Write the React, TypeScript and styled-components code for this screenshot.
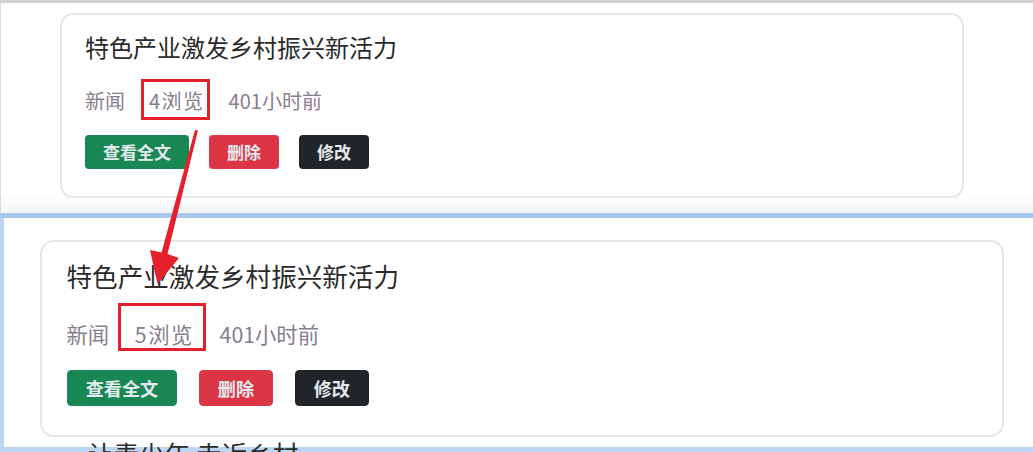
import styled, { createGlobalStyle } from 'styled-components';

// #region StyledComponents

const GlobalStyle = createGlobalStyle`
  html, body {
    margin: 0;
    padding: 0;
    background: #ffffff;
  }
  body {
    width: 1033px;
    height: 452px;
    overflow: hidden;
    font-family: 'Noto Sans CJK SC', 'Noto Sans', sans-serif;
  }
`;

const PageStyled = styled.div`
  position: relative;
  display: flex;
  flex-direction: column;
  width: 1033px;
  height: 452px;
  overflow: hidden;
`;

const TopShotStyled = styled.section`
  box-sizing: border-box;
  height: 213px;
  padding: 10px 0 0 60px;
  border-top: 3px solid #d2d2d2;
  background: linear-gradient(to bottom, #ffffff 0, #ffffff 192px, #f2f4f7 100%);
  box-shadow: inset 1px 0 0 #dcdcdc;
`;

const BottomShotStyled = styled.section`
  box-sizing: border-box;
  height: 239px;
  padding: 27px 0 0 40px;
  overflow: hidden;
  background: #ffffff;
  box-shadow:
    inset 0 5px 0 #a9c6ec,
    inset 4px 0 0 #bcd5f2,
    inset 0 -5px 0 #bdd5f2;
`;

const ZoomStyled = styled.div<{ $scale: number }>`
  zoom: ${(p) => p.$scale};
`;

const CardStyled = styled.article`
  box-sizing: border-box;
  width: 904px;
  height: 185px;
  padding: 14px 23px 0;
  border: 2px solid #e6e6e6;
  border-radius: 13px;
  background: #ffffff;
`;

const TitleStyled = styled.h3`
  margin: 0;
  font-size: 24px;
  line-height: 36px;
  font-weight: 400;
  color: #2a2a2a;
`;

const MetaRowStyled = styled.div`
  display: flex;
  align-items: center;
  gap: 24px;
  margin-top: 21px;
  font-size: 20px;
  line-height: 30px;
  color: #877e8e;
`;

const ViewsStyled = styled.span`
  letter-spacing: 1.5px;
`;

const ActionsStyled = styled.div`
  display: flex;
  gap: 20px;
  margin-top: 19px;
`;

const ButtonStyled = styled.button<{ $tone: 'success' | 'danger' | 'dark' }>`
  height: 34px;
  padding: 0 18px;
  border: none;
  border-radius: 4px;
  font-family: inherit;
  font-size: 17px;
  font-weight: 700;
  line-height: 34px;
  color: #e4ebef;
  background: ${(p) =>
    p.$tone === 'success' ? '#198754' : p.$tone === 'danger' ? '#dc3545' : '#212529'};
`;

const NextTitleStyled = styled.div`
  margin: -2px 0 0 45px;
  font-size: 24px;
  line-height: 36px;
  color: #2a2a2a;
  white-space: nowrap;
`;

const MarkBoxStyled = styled.div<{ $x: number; $y: number; $w: number; $h: number }>`
  position: absolute;
  left: ${(p) => p.$x}px;
  top: ${(p) => p.$y}px;
  width: ${(p) => p.$w}px;
  height: ${(p) => p.$h}px;
  box-sizing: border-box;
  border: 3px solid #e6202b;
  pointer-events: none;
`;

const ArrowStyled = styled.svg`
  position: absolute;
  left: 0;
  top: 0;
  pointer-events: none;
`;

// #endregion

type CardProps = {
  title: string;
  views: number;
};

function NewsCard({ title, views }: CardProps) {
  return (
    <CardStyled>
      <TitleStyled>{title}</TitleStyled>
      <MetaRowStyled>
        <span>新闻</span>
        <ViewsStyled>{views}浏览</ViewsStyled>
        <span>401小时前</span>
      </MetaRowStyled>
      <ActionsStyled>
        <ButtonStyled $tone="success">查看全文</ButtonStyled>
        <ButtonStyled $tone="danger">删除</ButtonStyled>
        <ButtonStyled $tone="dark">修改</ButtonStyled>
      </ActionsStyled>
    </CardStyled>
  );
}

export default function App() {
  const title = '特色产业激发乡村振兴新活力';
  return (
    <>
      <GlobalStyle />
      <PageStyled>
        <TopShotStyled>
          <NewsCard title={title} views={4} />
        </TopShotStyled>
        <BottomShotStyled>
          <ZoomStyled $scale={1.066}>
            <NewsCard title={title} views={5} />
            <NextTitleStyled>让青少年 走近乡村</NextTitleStyled>
          </ZoomStyled>
        </BottomShotStyled>

        <MarkBoxStyled $x={141} $y={79} $w={69} $h={41} />
        <MarkBoxStyled $x={118} $y={303} $w={88} $h={48} />
        <ArrowStyled width="1033" height="452" viewBox="0 0 1033 452">
          <polygon
            points="195,130 198,130.6 167.5,254 179,258 157.5,284 150,250 161.5,252.5"
            fill="#e6202b"
          />
        </ArrowStyled>
      </PageStyled>
    </>
  );
}
